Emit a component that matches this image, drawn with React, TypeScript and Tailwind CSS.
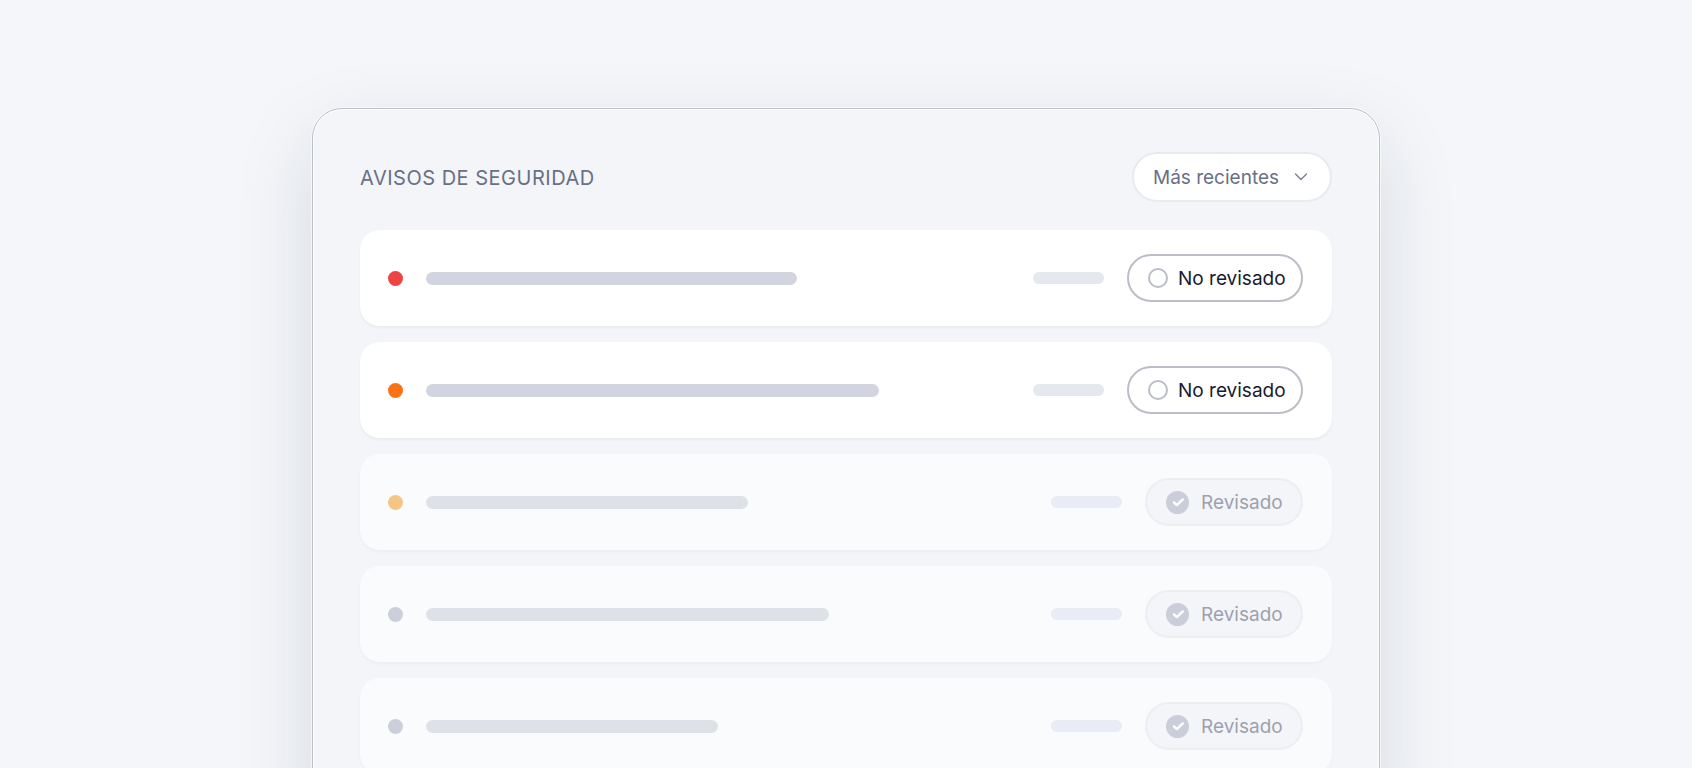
import { clsx } from "clsx";
import { useState } from "react";

interface Notice {
  id: number;
  dot: string;
  titleWidth: number;
  reviewed: boolean;
}

const INITIAL_NOTICES: Notice[] = [
  { id: 1, dot: "bg-[#ef4444]", titleWidth: 63.5, reviewed: false },
  { id: 2, dot: "bg-[#f97316]", titleWidth: 77.5, reviewed: false },
  { id: 3, dot: "bg-[#f3c684]", titleWidth: 53.5, reviewed: true },
  { id: 4, dot: "bg-[#cccfd9]", titleWidth: 67, reviewed: true },
  { id: 5, dot: "bg-[#cccfd9]", titleWidth: 48.5, reviewed: true },
];

export default function App() {
  const [notices, setNotices] = useState<Notice[]>(INITIAL_NOTICES);

  function toggle(id: number) {
    setNotices((list) => list.map((n) => (n.id === id ? { ...n, reviewed: !n.reviewed } : n)));
  }

  return (
    <main className="h-screen overflow-hidden bg-[#f4f6fa] px-6 pt-27 font-['Inter','Liberation_Sans',sans-serif]">
      <section
        aria-labelledby="notices-title"
        className="mx-auto max-w-[1068px] rounded-[30px] border border-[#bcbfc6] bg-[#f3f5f9] px-[47px] pt-[43px] pb-12 shadow-[inset_0_0_0_1px_#fcfdfe,0_0_0_1px_rgba(255,255,255,0.6),0_28px_80px_rgba(25,30,40,0.13)]"
      >
        <header className="flex items-center justify-between">
          <h1 id="notices-title" className="pt-0.5 text-xl tracking-wide text-[#687086] uppercase">
            Avisos de seguridad
          </h1>
          <SortSelect />
        </header>
        <ul className="mt-7 flex flex-col gap-4">
          {notices.map((n) => (
            <NoticeRow key={n.id} notice={n} onToggle={() => toggle(n.id)} />
          ))}
        </ul>
      </section>
    </main>
  );
}

function SortSelect() {
  return (
    <div className="relative">
      <select
        aria-label="Más recientes"
        className="h-[50px] w-50 appearance-none rounded-full border-2 border-[#e8eaf2] bg-white pt-0.5 pr-12 pl-[19px] text-[19px] text-[#687086]"
      >
        <option>Más recientes</option>
      </select>
      <svg
        aria-hidden
        viewBox="0 0 14 8"
        className="pointer-events-none absolute top-[21px] right-6 h-2 w-3.5"
        fill="none"
        stroke="#7a8094"
        strokeWidth="1.4"
        strokeLinecap="round"
        strokeLinejoin="round"
      >
        <path d="M1.5 1 7 6.5 12.5 1" />
      </svg>
    </div>
  );
}

function NoticeRow({ notice, onToggle }: { notice: Notice; onToggle: () => void }) {
  const { reviewed } = notice;
  return (
    <li
      className={clsx(
        "flex h-24 items-center gap-[23px] rounded-[20px] pr-[29px] pl-7",
        reviewed
          ? "bg-[#fafbfd] shadow-[0_2px_3px_rgba(30,35,50,0.03)]"
          : "bg-white shadow-[0_2px_3px_rgba(30,35,50,0.05)]",
      )}
    >
      <span className={clsx("size-[15px] shrink-0 rounded-full", notice.dot)} />
      <div className="min-w-0 flex-1">
        <div
          className={clsx("h-[13px] rounded-full", reviewed ? "bg-[#dee1e7]" : "bg-[#d2d5df]")}
          style={{ width: `${notice.titleWidth}%` }}
        />
      </div>
      <span className={clsx("h-3 w-[71px] shrink-0 rounded-full", reviewed ? "bg-[#e9ecf4]" : "bg-[#e6e8f0]")} />
      <ReviewButton reviewed={reviewed} onClick={onToggle} />
    </li>
  );
}

function ReviewButton({ reviewed, onClick }: { reviewed: boolean; onClick: () => void }) {
  const base = "flex h-12 shrink-0 items-center rounded-full border-2 pl-[19px] text-[19px]";
  const cls = reviewed
    ? "w-[158px] gap-3 border-[#eceef3] bg-[#f3f5f9] text-[#9da1ae]"
    : "w-44 gap-[10px] border-[#bbbec7] bg-white text-[#1a1a2e]";
  return (
    <button type="button" aria-pressed={reviewed} onClick={onClick} className={`${base} ${cls}`}>
      {reviewed ? <CheckIcon /> : <span className="size-5 rounded-full border-2 border-[#bbbec7]" />}
      <span className="pt-0.5">{reviewed ? "Revisado" : "No revisado"}</span>
    </button>
  );
}

function CheckIcon() {
  return (
    <svg aria-hidden viewBox="0 0 23 23" className="size-[23px]" fill="none">
      <circle cx="11.5" cy="11.5" r="11.5" fill="#cbced8" />
      <path
        d="M7.9 11.3 10.9 14.1 16.8 8.4"
        stroke="#fff"
        strokeWidth="2.4"
        strokeLinecap="round"
        strokeLinejoin="round"
      />
    </svg>
  );
}
